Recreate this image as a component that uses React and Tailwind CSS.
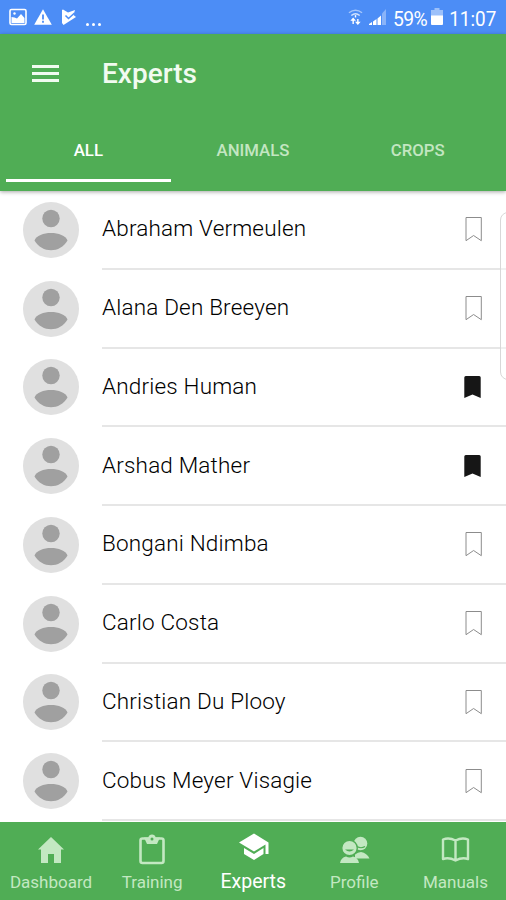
const people = [
  { name: "Abraham Vermeulen", saved: false },
  { name: "Alana Den Breeyen", saved: false },
  { name: "Andries Human", saved: true },
  { name: "Arshad Mather", saved: true },
  { name: "Bongani Ndimba", saved: false },
  { name: "Carlo Costa", saved: false },
  { name: "Christian Du Plooy", saved: false },
  { name: "Cobus Meyer Visagie", saved: false },
];

function StatusBar() {
  return (
    <div className="flex h-[34px] shrink-0 items-center bg-[#4c8df6] pl-[9px] pr-[10px] text-white">
      <svg className="h-[18px] w-[18px]" viewBox="0 0 18 18">
        <rect x="1" y="1.500" width="16" height="15" rx="1.500" fill="none" stroke="#fff" strokeWidth="1.600" />
        <path d="M2.500 9l3 .5 2.500 1 4-4.500 3.500 4v5H2.500z" fill="#fff" />
        <circle cx="5.500" cy="5.500" r="1.200" fill="#fff" />
      </svg>
      <svg className="ml-[7px] h-[18px] w-[18px]" viewBox="0 0 18 18">
        <path d="M9 1.300L17.800 16.700H.2z" fill="#fff" />
        <path d="M8.100 6.500h1.800v5H8.100zM8.100 12.800h1.800v1.900H8.100z" fill="#4c8df6" />
      </svg>
      <svg className="ml-[9px] h-[18px] w-[16px]" viewBox="0 0 16 18">
        <path d="M2 1.500l5 3 7-2.500-1.500 5L15 9 2.500 17 1 15V2z" fill="#fff" />
        <path d="M4.500 7.500l3 3L13.500 5" fill="none" stroke="#4c8df6" strokeWidth="1.500" />
      </svg>
      <div className="ml-[9px] mt-[14px] flex gap-[3px]">
        <i className="h-[3px] w-[3px] rounded-full bg-white" />
        <i className="h-[3px] w-[3px] rounded-full bg-white" />
        <i className="h-[3px] w-[3px] rounded-full bg-white" />
      </div>
      <svg className="ml-auto h-[18px] w-[15px]" viewBox="0 0 16 18" fill="none" stroke="#fff" strokeWidth="1.500">
        <path d="M1 4.500Q8-1 15 4.500" opacity=".5" />
        <path d="M3.500 7.500Q8 3.500 12.500 7.500" opacity=".75" />
        <path d="M8 7v2.500" />
        <path d="M5.500 16.500v-5M10.500 11v5" />
        <path d="M5.500 9.500l3 3.500h-6zM10.500 17.500l-3-3.500h6z" fill="#fff" stroke="none" />
      </svg>
      <svg className="ml-[6px] h-[18px] w-[17px]" viewBox="0 0 17 18" fill="#fff">
        <path d="M0 16l3-2v3H0zM4 13.500L7.500 11v6H4zM8.500 10.500L12 7.500V17H8.500z" />
        <path d="M13 5.500L17 1v16h-4z" opacity=".35" />
      </svg>
      <span className="ml-[7px] origin-left scale-x-[0.920] pt-[3px] text-[21px] leading-[34px] tracking-[-0.700px]">59%</span>
      <svg className="ml-[1px] h-[18px] w-[12px]" viewBox="0 0 12 18" fill="#fff">
        <path d="M3.500 0h5v2H12v6H0V2h3.500z" opacity=".45" />
        <path d="M0 7.500h12V16q0 1-1 1H1q-1 0-1-1z" />
      </svg>
      <span className="ml-px origin-right scale-x-[0.900] pt-[3px] text-[21px] leading-[34px]">11:07</span>
    </div>
  );
}

function Header() {
  return (
    <header className="z-10 flex h-[157px] shrink-0 flex-col bg-[#50ad55] shadow-[0_1px_4px_rgba(0,0,0,0.35)]">
      <div className="flex h-[79px] items-center pl-[32px]">
        <div className="flex w-[27px] flex-col gap-[4px]">
          <div className="h-[3px] bg-[#f1fbf0]" />
          <div className="h-[3px] bg-[#f1fbf0]" />
          <div className="h-[3px] bg-[#f1fbf0]" />
        </div>
        <h1 className="ml-[43px] text-[28px] font-medium leading-[36px] text-[#f1fbf0]">Experts</h1>
      </div>
      <div className="mx-[6px] flex h-[69px] text-[16.800px] font-medium">
        <div className="flex w-[165px] justify-center border-b-[3px] border-white pt-[25px] leading-[24px] text-white">ALL</div>
        <div className="flex w-[165px] justify-center pt-[25px] leading-[24px] text-[#c3e6c1]">ANIMALS</div>
        <div className="flex w-[165px] justify-center pt-[25px] leading-[24px] text-[#c3e6c1]">CROPS</div>
      </div>
    </header>
  );
}

function Avatar() {
  return (
    <svg className="h-[56px] w-[56px] shrink-0" viewBox="0 0 56 56">
      <circle cx="28" cy="28" r="28" fill="#e0e0e0" />
      <circle cx="28" cy="16.500" r="8.700" fill="#a0a0a0" />
      <path d="M11.500 38.500C15 28.500 41 28.500 44.500 38.500C37 51.500 19 51.500 11.500 38.500z" fill="#a0a0a0" />
    </svg>
  );
}

function Bookmark({ saved }) {
  return saved ? (
    <svg className="ml-auto mr-[23px] h-[26px] w-[20px]" viewBox="0 0 20 26">
      <path d="M1.300 3.500q0-1.500 1.500-1.500h13.400q1.500 0 1.500 1.500V24L9.500 20.500 1.300 24z" fill="#161616" />
    </svg>
  ) : (
    <svg className="ml-auto mr-[23px] h-[26px] w-[20px]" viewBox="0 0 20 26">
      <path d="M3 1.500h15.300v23.200L10.600 19.500 3 24.700z" fill="none" stroke="#8c8c8c" strokeWidth="1" />
    </svg>
  );
}

function NavItem({ label, active, children }) {
  return (
    <div className={active ? "flex w-[101.200px] flex-col items-center pt-[10px] text-white" : "flex w-[101.200px] flex-col items-center pt-[12px] text-[#c3e8c2]"}>
      <svg className="h-[32px] w-[32px] overflow-visible" viewBox="0 0 32 32">{children}</svg>
      <span className={active ? "mt-[6px] whitespace-nowrap text-[19.500px] leading-[24px]" : "mt-[4px] whitespace-nowrap text-[17px] leading-[24px]"}>{label}</span>
    </div>
  );
}

export default function App() {
  return (
    <div className="relative flex h-[900px] w-[506px] flex-col overflow-hidden bg-white font-[Roboto,sans-serif]">
      <StatusBar />
      <Header />
      <main className="h-[631px] shrink-0 overflow-hidden">
        {people.map((p) => (
          <div key={p.name} className="flex h-[78.750px] pl-[23px]">
            <div className="flex items-center pb-[1px]">
              <Avatar />
            </div>
            <div className="ml-[23px] flex flex-1 items-center border-b-2 border-[#e6e6e6]">
              <span className="pb-[2px] text-[22.500px] font-light leading-[30px] tracking-[0.180px] text-[#000]">{p.name}</span>
              <Bookmark saved={p.saved} />
            </div>
          </div>
        ))}
      </main>
      <nav className="flex h-[78px] shrink-0 bg-[#50ad55] pl-[0.500px]">
        <NavItem label="Dashboard">
          <path d="M16 3L29 15.500h-3V29h-7v-9h-6v9H6V15.500H3z" fill="currentColor" />
        </NavItem>
        <NavItem label="Training">
          <rect x="4.500" y="4.500" width="23" height="24.500" rx="2" fill="none" stroke="currentColor" strokeWidth="2.600" />
          <path d="M8 3.500h4.300a3.800 3.800 0 0 1 7.400 0H24l-3 6.500H11z" fill="currentColor" />
          <circle cx="16" cy="5" r="1.500" fill="#50ad55" />
        </NavItem>
        <NavItem label="Experts" active>
          <path d="M17 1.500L2 10.500 17 19.500 28.500 12.500V22h3V10.500z" fill="currentColor" />
          <path d="M7 16v6L17 28l9.500-6V16L17 22z" fill="currentColor" />
        </NavItem>
        <NavItem label="Profile">
          <circle cx="22.500" cy="9.500" r="6.800" fill="currentColor" />
          <path d="M19 12.500Q23 15 27 12.500" fill="none" stroke="#50ad55" strokeWidth="1.100" />
          <path d="M17 24.500V20.500q3-2.500 6-2.500 6 1 8.500 6.500z" fill="currentColor" />
          <circle cx="11.500" cy="14" r="7.800" fill="currentColor" stroke="#50ad55" strokeWidth="1.400" />
          <path d="M7 15.500h9Q11.500 19.500 7 15.500z" fill="#50ad55" />
          <path d="M2 29q1-5.500 6-6.500 3.500 2 7 0 5 1 6 6.500z" fill="currentColor" />
        </NavItem>
        <NavItem label="Manuals">
          <path d="M16.500 6.500Q10 3 4 5.500V25Q10 23 16.500 26.500Q23 23 29 25V5.500Q23 3 16.500 6.500zV26.500" fill="none" stroke="currentColor" strokeWidth="2.400" strokeLinejoin="round" />
        </NavItem>
      </nav>
      <div className="absolute right-[-12px] top-[212px] h-[168px] w-[18px] rounded-[8px] border border-[#d8d8d8] bg-white/40" />
    </div>
  );
}
